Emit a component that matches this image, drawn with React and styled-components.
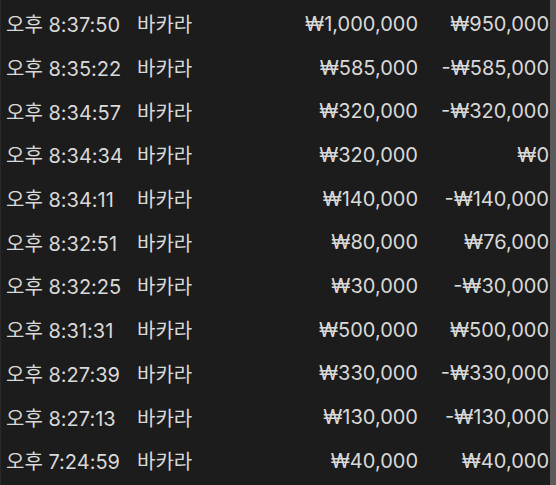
import React from 'react';
import styled, { createGlobalStyle } from 'styled-components';

const GlobalStyle = createGlobalStyle`
	html, body {
		margin: 0;
		padding: 0;
		background: #1c1c1c;
	}
`;

const Frame = styled.div`
	display: flex;
	width: 556px;
	height: 485px;
	overflow: hidden;
	background: #1c1c1c;
	font-family: Inter, "Noto Sans CJK KR", sans-serif;
	font-size: 20px;
	color: #d9d9d9;
`;

const List = styled.div`
	flex: 1;
	display: flex;
	flex-direction: column;
	padding-top: 2px;
	border-left: 1px solid #292929;
`;

const Scrollbar = styled.div`
	width: 6px;
	background: #5b5b5b;
`;

const Row = styled.div`
	display: grid;
	grid-template-columns: 131px 131px 150px 131px;
	align-items: center;
	height: 43.7px;
	padding-left: 5px;
	white-space: nowrap;
`;

const Cell = styled.div`
	text-align: ${(p) => (p.right ? 'right' : 'left')};
`;

const rows = [
	['오후 8:37:50', '₩1,000,000', '₩950,000'],
	['오후 8:35:22', '₩585,000', '-₩585,000'],
	['오후 8:34:57', '₩320,000', '-₩320,000'],
	['오후 8:34:34', '₩320,000', '₩0'],
	['오후 8:34:11', '₩140,000', '-₩140,000'],
	['오후 8:32:51', '₩80,000', '₩76,000'],
	['오후 8:32:25', '₩30,000', '-₩30,000'],
	['오후 8:31:31', '₩500,000', '₩500,000'],
	['오후 8:27:39', '₩330,000', '-₩330,000'],
	['오후 8:27:13', '₩130,000', '-₩130,000'],
	['오후 7:24:59', '₩40,000', '₩40,000']
];

export default function App() {
	return (
		<Frame>
			<GlobalStyle />
			<List>
				{rows.map(([time, bet, result]) => (
					<Row key={time}>
						<Cell>{time}</Cell>
						<Cell>바카라</Cell>
						<Cell right>{bet}</Cell>
						<Cell right>{result}</Cell>
					</Row>
				))}
			</List>
			<Scrollbar />
		</Frame>
	);
}
